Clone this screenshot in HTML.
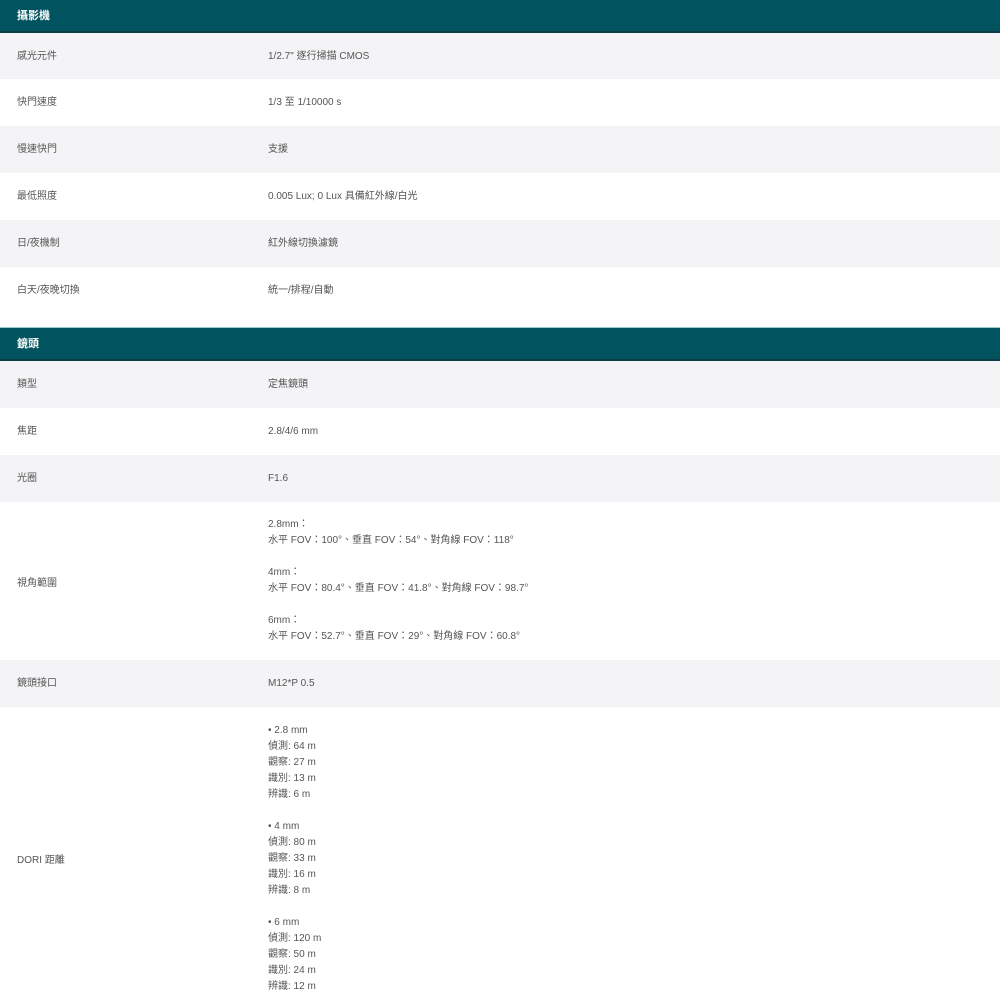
<!DOCTYPE html>
<html><head><meta charset="utf-8"><style>
body{margin:0;width:1000px;height:1000px;overflow:hidden;background:#fff;font-family:"Liberation Sans","Noto Sans CJK TC",sans-serif;font-size:10px;color:#555;position:relative}
.h{position:absolute;left:0;width:1000px;background:#01535f;color:#fff;font-weight:bold;font-size:11px;box-sizing:border-box;padding-left:17px;border-bottom:2px solid #0b3f48}
.r{position:absolute;left:0;width:1000px}
.g{background:#f4f4f6}
.l{position:absolute;left:17px;line-height:16px;top:16px}
.v{position:absolute;left:268px;line-height:16px;top:16px}
</style></head><body>
<div class="h" style="top:0;height:33px;line-height:32px">攝影機</div>
<div class="r g" style="top:33px;height:46px"><span class="l">感光元件</span><span class="v">1/2.7" 逐行掃描 CMOS</span></div>
<div class="r" style="top:79px;height:47px"><span class="l">快門速度</span><span class="v">1/3 至 1/10000 s</span></div>
<div class="r g" style="top:126px;height:47px"><span class="l">慢速快門</span><span class="v">支援</span></div>
<div class="r" style="top:173px;height:47px"><span class="l">最低照度</span><span class="v">0.005 Lux; 0 Lux 具備紅外線/白光</span></div>
<div class="r g" style="top:220px;height:47px"><span class="l">日/夜機制</span><span class="v">紅外線切換濾鏡</span></div>
<div class="r" style="top:267px;height:46px"><span class="l">白天/夜晚切換</span><span class="v">統一/排程/自動</span></div>
<div class="h" style="top:327px;height:34px;line-height:32px;border-top:1px solid #9cc">鏡頭</div>
<div class="r g" style="top:361px;height:47px"><span class="l">類型</span><span class="v">定焦鏡頭</span></div>
<div class="r" style="top:408px;height:47px"><span class="l">焦距</span><span class="v">2.8/4/6 mm</span></div>
<div class="r g" style="top:455px;height:47px"><span class="l">光圈</span><span class="v">F1.6</span></div>
<div class="r" style="top:502px;height:158px"><span class="l" style="top:74px">視角範圍</span><span class="v" style="top:15px">2.8mm：<br>水平 FOV：100°、垂直 FOV：54°、對角線 FOV：118°<br><br>4mm：<br>水平 FOV：80.4°、垂直 FOV：41.8°、對角線 FOV：98.7°<br><br>6mm：<br>水平 FOV：52.7°、垂直 FOV：29°、對角線 FOV：60.8°</span></div>
<div class="r g" style="top:660px;height:47px"><span class="l">鏡頭接口</span><span class="v">M12*P 0.5</span></div>
<div class="r" style="top:707px;height:293px"><span class="l" style="top:146px">DORI 距離</span><span class="v" style="top:16px">• 2.8 mm<br>偵測: 64 m<br>觀察: 27 m<br>識別: 13 m<br>辨識: 6 m<br><br>• 4 mm<br>偵測: 80 m<br>觀察: 33 m<br>識別: 16 m<br>辨識: 8 m<br><br>• 6 mm<br>偵測: 120 m<br>觀察: 50 m<br>識別: 24 m<br>辨識: 12 m</span></div>
</body></html>
